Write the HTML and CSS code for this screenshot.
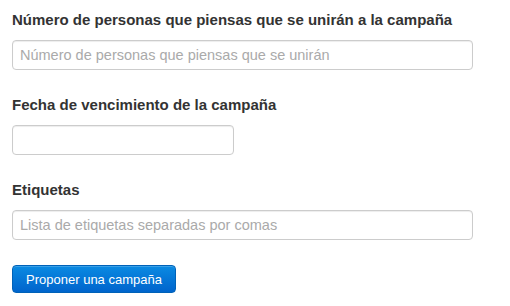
FILE: index.html
```html
<!DOCTYPE html>
<html lang="es">
<head>
<meta charset="utf-8">
<link rel="stylesheet" href="styles.css">
</head>
<body>
<form class="form">
  <div class="field">
    <label class="label" for="n">Número de personas que piensas que se unirán a la campaña</label>
    <input class="input input-wide" id="n" type="text" placeholder="Número de personas que piensas que se unirán">
  </div>
  <div class="field">
    <label class="label" for="f">Fecha de vencimiento de la campaña</label>
    <input class="input input-short" id="f" type="text">
  </div>
  <div class="field">
    <label class="label" for="t">Etiquetas</label>
    <input class="input input-wide" id="t" type="text" placeholder="Lista de etiquetas separadas por comas">
  </div>
  <button class="btn" type="button">Proponer una campaña</button>
</form>
</body>
</html>
```
FILE: styles.css
```css
html, body {
  margin: 0;
  padding: 0;
  background: #fff;
}
body {
  font-family: "Liberation Sans", Arial, sans-serif;
  color: #333;
}
.form {
  padding: 10px 12px 0 12px;
  display: flex;
  flex-direction: column;
  align-items: flex-start;
}
.field {
  display: flex;
  flex-direction: column;
  align-items: flex-start;
  margin-bottom: 25px;
}
.label {
  font-size: 15px;
  font-weight: bold;
  line-height: 20px;
  margin-bottom: 10px;
  color: #333;
}
.input {
  box-sizing: border-box;
  height: 30px;
  padding: 4px 7px;
  font-family: "Liberation Sans", Arial, sans-serif;
  font-size: 14.5px;
  color: #555;
  border: 1px solid #ccc;
  border-radius: 4px;
  box-shadow: inset 0 1px 1px rgba(0,0,0,0.075);
  background: #fff;
  outline: none;
}
.input::placeholder {
  color: #aaa;
}
.input-wide { width: 461px; }
.input-short { width: 222px; }
.btn {
  box-sizing: border-box;
  width: 164px;
  height: 28px;
  font-family: "Liberation Sans", Arial, sans-serif;
  font-size: 13px;
  color: #fff;
  border: 1px solid #0062b8;
  border-radius: 4px;
  background: linear-gradient(to bottom, #0a8ae2, #0064cc);
  box-shadow: inset 0 1px 0 rgba(255,255,255,0.2);
  padding: 0;
}
```
